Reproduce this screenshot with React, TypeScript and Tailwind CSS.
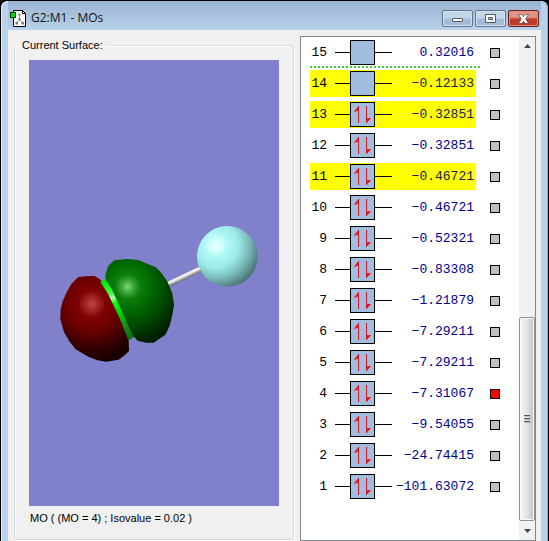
import { useState } from "react";

type Orbital = {
  id: number;
  energy: string;
  occupied: boolean;
  highlighted?: boolean;
};

const orbitals: Orbital[] = [
  { id: 15, energy: "0.32016", occupied: false },
  { id: 14, energy: "−0.12133", occupied: false, highlighted: true },
  { id: 13, energy: "−0.32851", occupied: true, highlighted: true },
  { id: 12, energy: "−0.32851", occupied: true },
  { id: 11, energy: "−0.46721", occupied: true, highlighted: true },
  { id: 10, energy: "−0.46721", occupied: true },
  { id: 9, energy: "−0.52321", occupied: true },
  { id: 8, energy: "−0.83308", occupied: true },
  { id: 7, energy: "−1.21879", occupied: true },
  { id: 6, energy: "−7.29211", occupied: true },
  { id: 5, energy: "−7.29211", occupied: true },
  { id: 4, energy: "−7.31067", occupied: true },
  { id: 3, energy: "−9.54055", occupied: true },
  { id: 2, energy: "−24.74415", occupied: true },
  { id: 1, energy: "−101.63072", occupied: true },
];

function FileIcon() {
  return (
    <svg width="17" height="17" viewBox="0 0 17 17" aria-hidden="true">
      <path d="M3.500 .5h9l3 3v13h-12z" fill="#fff" stroke="#000" />
      <path d="M12.500 .5v3h3" fill="none" stroke="#000" />
      <path d="M9.500 5v4.500L6.500 13M9.500 9.500L12.500 13" fill="none" stroke="#999" />
      <path d="M8.500 3.500h2v2h-2zM5.500 12h2.500v2.500H5.500zM11.500 12h2.500v2.500h-2.500zM8.500 8h2v2.500h-2z" fill="#777" />
      <rect x=".5" y="2.500" width="5" height="5" fill="#00e000" stroke="#003800" />
    </svg>
  );
}

function TitleBar() {
  const button =
    "flex h-[17px] w-[31px] items-center justify-center rounded-[2px] border border-[#62758d] bg-linear-to-b from-[#c3d5e8] from-45% to-[#a3bcd8] to-55% shadow-[inset_0_0_0_1px_#d3e1f0]";
  return (
    <header className="flex h-[29px] gap-1 bg-linear-to-b from-[#99b4d3] to-[#b9d1ea] pl-[2px] pt-[9px]">
      <FileIcon />
      <h1 className="flex-1 font-['Open_Sans',sans-serif] text-[12px] leading-4 text-[#111]">
        G2:M1 - MOs
      </h1>
      <div className="flex gap-[2px] pr-[2px]">
        <button aria-label="Minimize" className={button}>
          <svg width="13" height="9" viewBox="0 0 13 9">
            <rect x="1.500" y="4.500" width="10" height="3" rx=".5" fill="#fff" stroke="#505a68" />
          </svg>
        </button>
        <button aria-label="Maximize" className={button}>
          <svg width="13" height="9" viewBox="0 0 13 9">
            <path d="M1.500 .5h10v8h-10zM4.500 3.500v2h4v-2z" fill="#fff" fillRule="evenodd" stroke="#505a68" />
          </svg>
        </button>
        <button
          aria-label="Close"
          className="flex h-[17px] w-[31px] items-center justify-center rounded-[2px] border border-[#6b2222] bg-linear-to-b from-[#dd9688] from-40% to-[#c03a28] to-55% shadow-[inset_0_0_0_1px_#dd8f80]"
        >
          <svg width="13" height="10" viewBox="0 0 13 10">
            <path d="M1.500 .5h3l2 2.200 2-2.200h3L8.700 5l2.800 4.500h-3L6.500 7.300l-2 2.200h-3L4.300 5z" fill="#fff" stroke="#5b4450" strokeWidth=".7" />
          </svg>
        </button>
      </div>
    </header>
  );
}

function SurfaceView() {
  return (
    <svg
      className="min-h-0 w-full flex-1 bg-[#8080cb]"
      viewBox="0 0 250 446"
      role="img"
      aria-label="Molecular orbital surface"
    >
      <defs>
        <radialGradient id="atom" gradientUnits="userSpaceOnUse" cx="528" cy="106" r="140">
          <stop offset="0" stopColor="#effffe" />
          <stop offset=".12" stopColor="#d0fffc" />
          <stop offset=".25" stopColor="#aff8f5" />
          <stop offset=".48" stopColor="#9ceae8" />
          <stop offset=".7" stopColor="#7cbcbc" />
          <stop offset="1" stopColor="#446a6c" />
        </radialGradient>
        <radialGradient id="red" gradientUnits="userSpaceOnUse" cx="155" cy="282" r="165">
          <stop offset="0" stopColor="#b84646" />
          <stop offset=".12" stopColor="#a02525" />
          <stop offset=".25" stopColor="#800303" />
          <stop offset=".5" stopColor="#690000" />
          <stop offset=".75" stopColor="#3c0000" />
          <stop offset="1" stopColor="#1c0000" />
        </radialGradient>
        <radialGradient id="green" gradientUnits="userSpaceOnUse" cx="263" cy="230" r="172">
          <stop offset="0" stopColor="#73dc73" />
          <stop offset=".1" stopColor="#42a842" />
          <stop offset=".22" stopColor="#0b7e0b" />
          <stop offset=".45" stopColor="#006600" />
          <stop offset=".75" stopColor="#003e00" />
          <stop offset="1" stopColor="#001e00" />
        </radialGradient>
        <linearGradient id="ring" gradientUnits="userSpaceOnUse" x1="190" y1="210" x2="275" y2="390">
          <stop offset="0" stopColor="#00e400" />
          <stop offset=".24" stopColor="#42ff42" />
          <stop offset=".3" stopColor="#b4ffb4" />
          <stop offset=".38" stopColor="#12ff12" />
          <stop offset=".6" stopColor="#00c800" />
          <stop offset=".75" stopColor="#189018" />
          <stop offset="1" stopColor="#006b00" />
        </linearGradient>
        <linearGradient id="bond" gradientUnits="userSpaceOnUse" x1="426" y1="192" x2="435" y2="211">
          <stop offset="0" stopColor="#b9b9b9" />
          <stop offset=".3" stopColor="#fff" />
          <stop offset="1" stopColor="#514b50" />
        </linearGradient>
      </defs>
      <g transform="translate(11 150) scale(.33333)">
        <path d="M380 216L480 169L486 183L388 232z" fill="url(#bond)" />
        <circle cx="562" cy="139" r="91" fill="url(#atom)" />
        <path
          d="M115 201L139 199L163 198L180 208L190 220L207 254L225 288L244 330L266 390L267 423L254 436L236 449L198 455L173 451L145 440L107 418L88 394L72 366L61 328L62 298L68 274L80 247L94 222z"
          fill="url(#red)"
        />
        <path d="M181 216L197 206L214 230L284 380L265 391L240 327L204 251z" fill="url(#ring)" />
        <path
          d="M223 151L263 147L294 150L329 164L347 171L365 190L383 216L397 250L402 285L397 315L389 347L376 374L341 398L318 398L293 392L281 379L266 350L249 312L232 274L215 237L198 211L196 196L205 167z"
          fill="url(#green)"
        />
      </g>
    </svg>
  );
}

function OrbitalBox({ occupied }: { occupied: boolean }) {
  return (
    <svg width="57" height="25" viewBox="0 0 57 25" className="block" aria-hidden="true">
      <path d="M0 12.500h57" stroke="#000" />
      <rect x="15.500" y=".5" width="24" height="24" fill="#a2bedf" stroke="#000" />
      {occupied && (
        <g fill="#e4141e" stroke="#e4141e">
          <path d="M23.500 21V4M31.500 4v17" />
          <path d="M23.500 4.500V8L19.500 9.500z" strokeWidth=".8" />
          <path d="M31.500 20.500V16.500l4 0z" strokeWidth=".8" />
        </g>
      )}
    </svg>
  );
}

function ScrollBar() {
  return (
    <div className="flex w-[16px] flex-col bg-[#f1f1f1]">
      <button aria-label="Scroll up" className="flex h-[17px] items-center justify-center">
        <svg width="7" height="4" viewBox="0 0 7 4">
          <path d="M3.500 0L7 4H0z" fill="#444" />
        </svg>
      </button>
      <div className="flex-[264]" />
      <div className="flex flex-[203] items-center justify-center rounded-[2px] border border-[#8f8f8f] bg-linear-to-r from-[#f6f6f6] via-[#e4e4e6] to-[#c0c0c5] shadow-[inset_0_0_0_1px_#fafafa]">
        <svg width="7" height="9" viewBox="0 0 7 9">
          <path d="M0 1.500h6M0 4.500h6M0 7.500h6" stroke="#555" />
          <path d="M1 2.500h6M1 5.500h6M1 8.500h6" stroke="#bbb" />
        </svg>
      </div>
      <button aria-label="Scroll down" className="flex h-[19px] items-center justify-center">
        <svg width="7" height="4" viewBox="0 0 7 4">
          <path d="M0 0h7L3.500 4z" fill="#444" />
        </svg>
      </button>
    </div>
  );
}

export default function App() {
  const [selected, setSelected] = useState<number[]>([4]);

  const toggle = (id: number) => {
    setSelected((prev) => (prev.includes(id) ? prev.filter((n) => n !== id) : [...prev, id]));
  };

  return (
    <div className="h-screen bg-black">
      <div className="flex h-full flex-col overflow-hidden rounded-t-[7px] border border-b-0 border-black bg-[#b9d1ea] bg-clip-padding px-[7px] shadow-[inset_-1px_0_0_#39cbed,inset_1px_1px_0_#e3eef8]">
        <TitleBar />
        <main className="flex min-h-0 flex-1 gap-[6px] bg-[#f0f0f0] pl-[6px] pr-[5px] pt-[6px]">
          <fieldset className="mb-[1px] flex min-w-0 flex-1 flex-col rounded-[3px] border border-[#d5dadd] px-[14px] font-['Liberation_Sans',sans-serif] text-[11px] text-black shadow-[inset_1px_1px_0_#fff,1px_1px_0_#fff]">
            <legend className="-ml-[14px] px-[7px] leading-[18px]">Current Surface:</legend>
            <div className="flex h-full flex-col pt-[6px]">
              <SurfaceView />
              <p className="px-[1px] pb-[11px] pt-[2px] leading-5">MO ( (MO = 4) ; Isovalue = 0.02 )</p>
            </div>
          </fieldset>

          <section className="flex w-[236px] border border-[#828790] bg-white">
            <div className="flex-1 overflow-hidden pl-[9px]">
              <table className="border-collapse font-['Liberation_Mono',monospace] text-[13px] leading-none">
                <tbody>
                  {orbitals.map((orbital) => {
                    const cell = orbital.highlighted
                      ? "flex h-[27px] items-center bg-[#ffff00]"
                      : "flex h-[27px] items-center";
                    return (
                      <tr
                        key={orbital.id}
                        className={
                          orbital.id === 15
                            ? "bg-[repeating-linear-gradient(to_right,#3fce3f_0_2px,transparent_2px_4px)] bg-[length:170px_2px] bg-bottom-left bg-no-repeat"
                            : ""
                        }
                      >
                        <th scope="row" className="py-[2px] font-normal">
                          <div className={`${cell} w-[25px] justify-end pr-2`}>{orbital.id}</div>
                        </th>
                        <td className="py-[2px]">
                          <div className={cell}>
                            <OrbitalBox occupied={orbital.occupied} />
                          </div>
                        </td>
                        <td className="py-[2px]">
                          <div
                            className={`${cell} w-[84px] justify-end pr-[2px] ${
                              orbital.highlighted ? "text-[#20205c]" : "text-[#00008f]"
                            }`}
                          >
                            {orbital.energy}
                          </div>
                        </td>
                        <td className="py-[2px]">
                          <div className="flex h-[27px] items-center pl-[14px]">
                            <input
                              type="checkbox"
                              aria-label={`Orbital ${orbital.id}`}
                              checked={selected.includes(orbital.id)}
                              onChange={() => toggle(orbital.id)}
                              className="size-[10px] appearance-none border border-black bg-[#c0c0c0] checked:bg-[#ff0000]"
                            />
                          </div>
                        </td>
                      </tr>
                    );
                  })}
                </tbody>
              </table>
            </div>
            <ScrollBar />
          </section>
        </main>
      </div>
    </div>
  );
}
